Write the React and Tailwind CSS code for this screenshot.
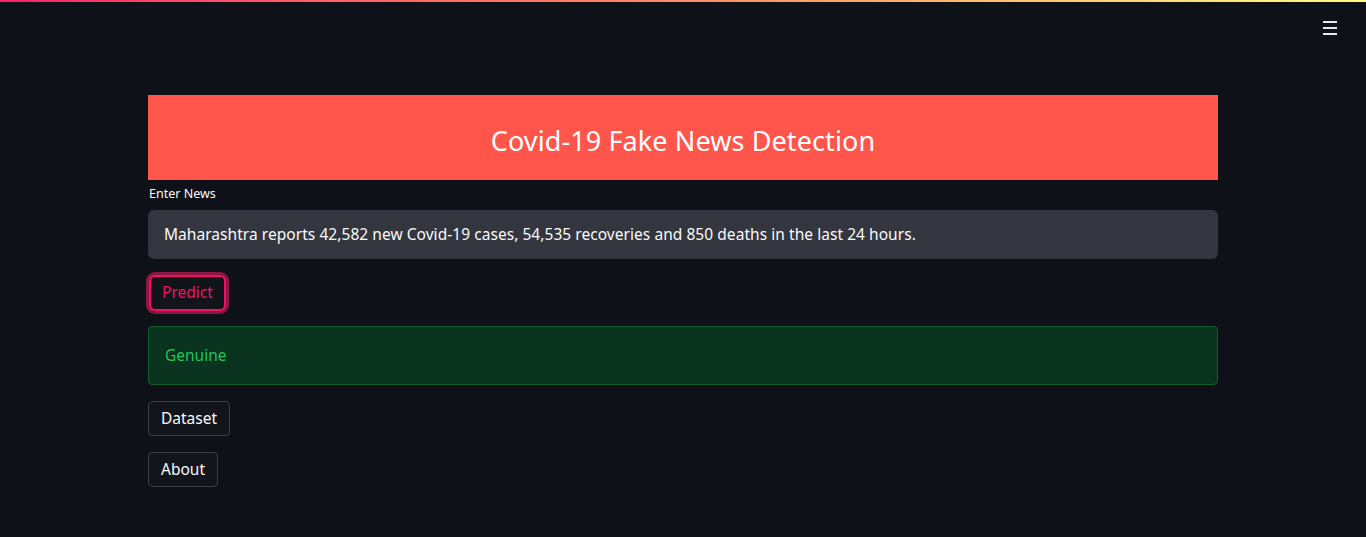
import React from "react";

const font = { fontFamily: '"Noto Sans", "Open Sans", sans-serif' };

const App = () => {
  return (
    <div className="w-full h-[537px] bg-[#0e1117] text-white overflow-hidden" style={font}>
      {/* top decoration line */}
      <div className="h-[2px] w-full bg-gradient-to-r from-[#ff1f6b] via-[#ff8a66] to-[#fffd80]" />

      {/* toolbar */}
      <div className="flex justify-end pr-[25px] pt-[15px]">
        <button className="w-[22px] h-[22px] flex flex-col justify-center items-center gap-[4px]">
          <span className="block w-[14px] h-[2px] bg-[#e8e8ea]" />
          <span className="block w-[14px] h-[2px] bg-[#e8e8ea]" />
          <span className="block w-[14px] h-[2px] bg-[#e8e8ea]" />
        </button>
      </div>

      {/* main block */}
      <div className="w-[1070px] ml-[148px] mt-[56px] flex flex-col">
        <div className="h-[85px] bg-[#ff554b] flex items-center justify-center pt-[7px]">
          <h1 className="text-[27px] text-white font-normal tracking-[0.1px]">Covid-19 Fake News Detection</h1>
        </div>

        <label className="text-[12.5px] text-[#fafafa] mt-[5px] leading-[17px] pl-[1px]">Enter News</label>

        <div className="mt-[8px] h-[49px] rounded-[6px] bg-[#33353f] flex items-center px-[16px]">
          <span className="text-[15.5px] text-[#fafafa] tracking-[0.05px]">
            Maharashtra reports 42,582 new Covid-19 cases, 54,535 recoveries and 850 deaths in the last 24 hours.
          </span>
        </div>

        <div className="mt-[16px]">
          <button className="h-[36px] px-[11px] rounded-[6px] border-2 border-[#f0125e] ring-[3px] ring-[#8d1744] bg-[#12141c] text-[#f0125e] text-[15.5px] ml-[1px]">
            Predict
          </button>
        </div>

        <div className="mt-[15px] h-[59px] rounded-[4px] bg-[#0a3320] border border-[#135a30] flex items-center px-[16px]">
          <span className="text-[15.5px] text-[#21c35a]">Genuine</span>
        </div>

        <div className="mt-[16px]">
          <button className="h-[35px] px-[12px] rounded-[4px] border border-[#3d3f49] bg-[#13151d] text-[#fafafa] text-[15.5px]">
            Dataset
          </button>
        </div>

        <div className="mt-[16px]">
          <button className="h-[35px] px-[12px] rounded-[4px] border border-[#3d3f49] bg-[#13151d] text-[#fafafa] text-[15.5px]">
            About
          </button>
        </div>
      </div>
    </div>
  );
};

export default App;
